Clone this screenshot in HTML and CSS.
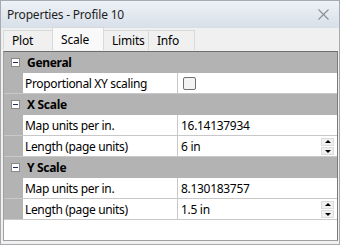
FILE: index.html
```html
<!DOCTYPE html>
<html lang="en">
<head>
  <meta charset="UTF-8" />
  <title>Properties - Profile 10</title>
  <link rel="stylesheet" href="styles.css">
</head>
<body>
  <div class="window">
    <!-- Title bar -->
    <header class="titlebar">
      <span class="title">Properties - Profile 10</span>
      <svg class="close" width="11" height="11" viewBox="0 0 11 11">
        <path d="M0.5 0.5 L10.5 10.5 M10.5 0.5 L0.5 10.5" stroke="#8a8f96" stroke-width="1.1" fill="none"/>
      </svg>
    </header>
    <!-- Tabs -->
    <nav class="tabs">
      <div class="tab">Plot</div>
      <div class="tab active">Scale</div>
      <div class="tab">Limits</div>
      <div class="tab">Info</div>
    </nav>
    <!-- Property grid -->
    <main class="panel">
      <div class="grid">
        <div class="cat"><span class="toggle"></span>General</div>
        <div class="row">
          <div class="gutter"></div>
          <div class="label">Proportional XY scaling</div>
          <div class="value"><span class="check"></span></div>
        </div>
        <div class="cat"><span class="toggle"></span>X Scale</div>
        <div class="row">
          <div class="gutter"></div>
          <div class="label">Map units per in.</div>
          <div class="value">16.14137934</div>
        </div>
        <div class="row">
          <div class="gutter"></div>
          <div class="label">Length (page units)</div>
          <div class="value">6 in
            <span class="spin"><span class="up"></span><span class="down"></span></span>
          </div>
        </div>
        <div class="cat"><span class="toggle"></span>Y Scale</div>
        <div class="row">
          <div class="gutter"></div>
          <div class="label">Map units per in.</div>
          <div class="value">8.130183757</div>
        </div>
        <div class="row">
          <div class="gutter"></div>
          <div class="label">Length (page units)</div>
          <div class="value">1.5 in
            <span class="spin"><span class="up"></span><span class="down"></span></span>
          </div>
        </div>
      </div>
    </main>
  </div>
</body>
</html>
```

FILE: styles.css
```css
* {
  margin: 0;
  padding: 0;
  box-sizing: border-box;
}
body {
  font-family: "Noto Sans", "Open Sans", sans-serif;
  font-size: 12px;
  color: #000;
  background: #fff;
}
.window {
  width: 340px;
  height: 245px;
  border: 1px solid #a7abb0;
  background: #f0f0f0;
  display: flex;
  flex-direction: column;
}
/* Title bar */
.titlebar {
  height: 27px;
  display: flex;
  align-items: center;
  justify-content: space-between;
  padding: 0 10px 0 6px;
  background: linear-gradient(#eef2f7, #d7dfe9);
}
.title {
  font-size: 12px;
  color: #1e1e1e;
  letter-spacing: -0.2px;
}
.close {
  display: block;
}
/* Tabs */
.tabs {
  height: 22px;
  display: flex;
  align-items: flex-end;
  padding-left: 2px;
  background: #f0f0f0;
}
.tab {
  height: 20px;
  padding: 0 8px;
  border: 1px solid #d9d9d9;
  border-bottom: none;
  margin-right: -1px;
  display: flex;
  align-items: center;
  letter-spacing: -0.2px;
}
.tab:nth-child(1) { width: 50px; }
.tab:nth-child(2) { width: 52px; }
.tab:nth-child(3) { width: 46px; }
.tab:nth-child(4) { width: 47px; }
.tab.active {
  height: 23px;
  background: #f9f9f9;
  position: relative;
  z-index: 1;
}
/* Panel and grid */
.panel {
  flex: 1;
  padding: 1px 1px 3px 2px;
}
.grid {
  height: 190px;
  background: #fff;
  border: 1px solid #a0a0a0;
  border-top-color: #6e6e6e;
  border-right-color: #7a7a7a;
}
.cat {
  height: 21px;
  background: #b3b3b3;
  display: flex;
  align-items: center;
  padding-left: 5px;
  font-weight: bold;
  letter-spacing: -0.3px;
}
.toggle {
  width: 9px;
  height: 9px;
  border: 1px solid #8a8a8a;
  background: #fff;
  margin: 0 7px 0 2px;
  position: relative;
}
.toggle::after {
  content: "";
  position: absolute;
  left: 1px;
  top: 3px;
  width: 5px;
  height: 1px;
  background: #1e2f5a;
}
.row {
  height: 21px;
  display: flex;
  border-bottom: 1px solid #c8c8c8;
}
.gutter {
  width: 19px;
  background: #b3b3b3;
}
.label {
  width: 155px;
  padding-left: 2px;
  border-right: 1px solid #c8c8c8;
  display: flex;
  align-items: center;
  letter-spacing: -0.35px;
}
.value {
  flex: 1;
  padding-left: 3px;
  display: flex;
  align-items: center;
  letter-spacing: -0.3px;
}
.check {
  width: 13px;
  height: 13px;
  border: 1px solid #707070;
  border-radius: 2px;
  background: #f3f3f3;
  margin-left: 2px;
}
.spin {
  margin-left: auto;
  margin-right: 3px;
  display: flex;
  flex-direction: column;
  gap: 1px;
}
.spin span {
  width: 13px;
  height: 8px;
  background: #f0f0f0;
  border: 1px solid #dcdcdc;
  position: relative;
}
.spin span::after {
  content: "";
  position: absolute;
  left: 3px;
  width: 0;
  height: 0;
  border-left: 3px solid transparent;
  border-right: 3px solid transparent;
}
.spin .up::after {
  top: 1px;
  border-bottom: 3px solid #000;
}
.spin .down::after {
  top: 2px;
  border-top: 3px solid #000;
}
```
